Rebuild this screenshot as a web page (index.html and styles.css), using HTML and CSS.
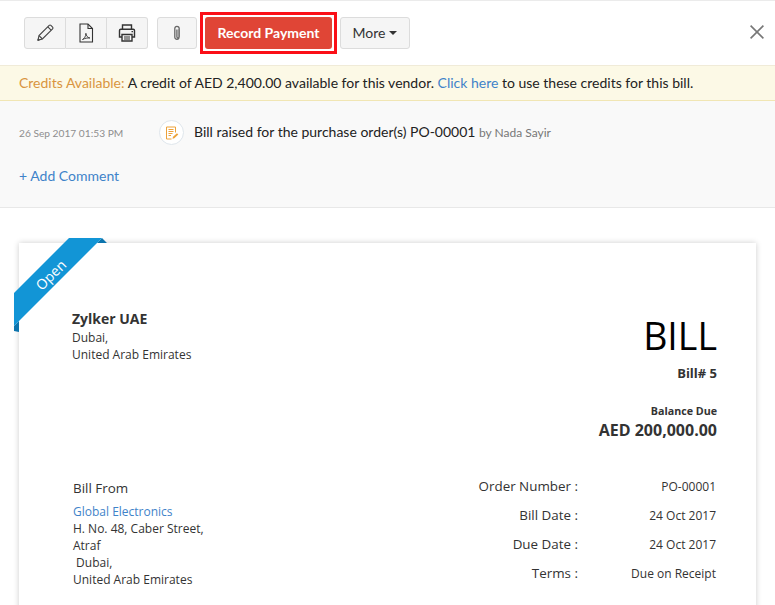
FILE: index.html
```html
<!DOCTYPE html>
<html lang="en">
<head>
<meta charset="utf-8">
<title>Bill 5</title>
<link rel="stylesheet" href="styles.css">
</head>
<body>
<header class="toolbar">
  <div class="btn-group">
    <button class="btn icon-btn first" aria-label="Edit"><svg width="20" height="20" viewBox="0 0 20 20" fill="none" stroke="#444" stroke-width="1.1"><path d="M3 17.2l1-4.6L14.2 2.4c.5-.5 1.2-.5 1.7 0l1.7 1.7c.5.5.5 1.2 0 1.7L7.4 16z"/><path d="M12.8 3.9l3.3 3.3M4 12.6L7.4 16"/><path d="M3 17.2l1.2-1.2" stroke-width="2"/></svg></button>
    <button class="btn icon-btn" aria-label="PDF"><svg width="16" height="20" viewBox="0 0 16 20" fill="none" stroke="#333" stroke-width="1.1"><path d="M2 1h8l4.500 4.500V19H2z"/><path d="M10 1v4.500h4.500"/><path d="M4.500 16.500c2-1 3.200-3 3.400-6.200.3 2.500 1.500 4.200 4 4.700-2.500-.2-5 .2-7.400 1.500z" stroke-width=".9"/></svg></button>
    <button class="btn icon-btn last" aria-label="Print"><svg width="18" height="18" viewBox="0 0 18 18" fill="none" stroke="#333" stroke-width="1.4"><path d="M4.500 5V1h9v4"/><path d="M4 13H1.500V6.500c0-.8.500-1.300 1.300-1.300h12.400c.8 0 1.300.5 1.300 1.300V13H14"/><path d="M4 10.500h10V17H4z"/><path d="M6 13h6M6 15h6" stroke-width="1"/><path d="M13.500 7.600h1.500" stroke-width="1.200"/></svg></button>
  </div>
  <button class="btn attach" aria-label="Attach"><svg width="10" height="16" viewBox="0 0 10 16" fill="none" stroke="#666" stroke-width="1.3"><path d="M7 4v8c0 1.300-.9 2.400-2.100 2.400S2.800 13.300 2.800 12V3.600c0-1.300.9-2.300 2.100-2.300s2.300 1 2.300 2.300v8.100c0 .7-.5 1.200-1.100 1.200s-1.200-.5-1.200-1.200V4.500"/></svg></button>
  <div class="primary-outline"><button class="btn-primary">Record Payment</button></div>
  <button class="btn more">More <span class="caret"></span></button>
  <button class="close" aria-label="Close"><svg width="14" height="14" viewBox="0 0 14 14" stroke="#777" stroke-width="1.600" fill="none"><path d="M.6.6l12.800 12.800M13.400.6L.6 13.400"/></svg></button>
</header>

<div class="banner"><span class="banner-label">Credits Available:</span> A credit of AED 2,400.00 available for this vendor. <a class="link" href="#">Click here</a> to use these credits for this bill.</div>

<section class="activity">
  <div class="activity-row">
    <time class="activity-time">26 Sep 2017 01:53 PM</time>
    <span class="activity-icon"><svg width="14" height="14" viewBox="0 0 14 14" fill="none" stroke="#eda23a" stroke-width="1"><path d="M10.500 6.500V1H1.500v12h5"/><path d="M3.500 3.500h5M3.500 5.500h5M3.500 7.500h4M3.500 9.500h2.500"/><path d="M7.500 12.800l.5-2 4-3.500 1.300 1.300-4 3.700z" fill="#eda23a" stroke="none"/></svg></span>
    <p class="activity-text">Bill raised for the purchase order(s) PO-00001 <span class="by">by Nada Sayir</span></p>
  </div>
  <a class="add-comment" href="#">+ Add Comment</a>
</section>

<main class="canvas">
  <article class="bill">
    <div class="ribbon">
      <svg class="ribbon-art" width="94" height="94" viewBox="0 0 94 94"><path d="M88 0l5 5H83zM0 88l5-5v11l-5-1z" fill="#0c74ad"/><path d="M55 0H88L0 88V55z" fill="#1295d6"/></svg>
      <span class="ribbon-text">Open</span>
    </div>
    <div class="bill-head">
      <div class="org">
        <strong class="org-name">Zylker UAE</strong>
        <div>Dubai,</div>
        <div>United Arab Emirates</div>
      </div>
      <div class="title-block">
        <h1 class="bill-title">BILL</h1>
        <div class="bill-no">Bill# 5</div>
        <div class="balance-label">Balance Due</div>
        <div class="balance-value">AED 200,000.00</div>
      </div>
    </div>
    <div class="bill-body">
      <div class="vendor">
        <div class="vendor-label">Bill From</div>
        <a class="vendor-name" href="#">Global Electronics</a>
        <div>H. No. 48, Caber Street,</div>
        <div>Atraf</div>
        <div>&nbsp;Dubai,</div>
        <div>United Arab Emirates</div>
      </div>
      <dl class="meta">
        <dt>Order Number :</dt><dd>PO-00001</dd>
        <dt>Bill Date :</dt><dd>24 Oct 2017</dd>
        <dt>Due Date :</dt><dd>24 Oct 2017</dd>
        <dt>Terms :</dt><dd>Due on Receipt</dd>
      </dl>
    </div>
  </article>
</main>
</body>
</html>
```
FILE: styles.css
```css
* { box-sizing: border-box; }
html, body { height: 605px; overflow: hidden; }
body { margin: 0; background: #fff; color: #222; font-family: Lato, "Liberation Sans", sans-serif; font-size: 14px; }
button { font: inherit; cursor: pointer; padding: 0; }

.toolbar { display: flex; align-items: center; height: 65px; border-top: 1px solid #ebebeb; padding-left: 24px; }
.btn { height: 32px; background: #f5f5f5; border: 1px solid #dcdcdc; border-radius: 3px; display: flex; align-items: center; justify-content: center; color: #333; }
.btn-group { display: flex; }
.icon-btn { width: 41px; border-radius: 0; border-left: 0; }
.icon-btn.first { width: 42px; border-left: 1px solid #dcdcdc; border-radius: 3px 0 0 3px; }
.icon-btn.last { border-radius: 0 3px 3px 0; }
.attach { width: 40px; margin-left: 9px; }
.primary-outline { margin-left: 3px; border: 3px solid #fb0f17; padding: 2px; height: 42px; width: 137px; }
.btn-primary { display: block; width: 100%; height: 100%; background: #e04536; color: #fff; border: 0; border-radius: 3px; font-size: 14px; font-weight: 700; padding-bottom: 2px; }
.more { width: 70px; margin-left: 3px; font-size: 14px; gap: 4px; padding-bottom: 2px; }
.caret { width: 0; height: 0; border: 4px solid transparent; border-top-color: #333; border-bottom: 0; margin-top: 2px; }
.close { margin-left: auto; margin-right: 11px; background: none; border: 0; display: flex; margin-bottom: 2px; }

.banner { height: 36px; background: #fcf9e6; border-top: 1px solid #f0ebd8; border-bottom: 1px solid #f1e6b4; padding-left: 19px; line-height: 33px; font-size: 14px; color: #222; }
.banner-label { color: #d9953f; }
.link { color: #3f83c9; text-decoration: none; }

.activity { height: 107px; background: #f9f9f9; border-bottom: 1px solid #e8e8e8; padding: 19px 19px 0; }
.activity-row { display: flex; align-items: center; height: 25px; }
.activity-time { width: 140px; font-size: 10.200px; color: #8e8e8e; }
.activity-icon { width: 25px; height: 25px; border-radius: 50%; background: #fff; border: 1px solid #dfe6ec; display: flex; align-items: center; justify-content: center; }
.activity-text { margin: 0 0 0 10px; font-size: 14px; color: #222; position: relative; top: -1px; }
.by { font-size: 12px; color: #777; }
.add-comment { display: block; margin-top: 22px; color: #3f83c9; text-decoration: none; font-size: 14px; }

.canvas { padding: 35px 19px 0; }
.bill { position: relative; height: 500px; background: #fff; box-shadow: 0 0 6px rgba(0,0,0,.2); padding: 66px 39px 0 53px; font-family: "Open Sans", sans-serif; font-size: 12px; line-height: 17px; color: #333; }
.ribbon { position: absolute; left: -5px; top: -5px; width: 94px; height: 94px; }
.ribbon-art { display: block; }
.ribbon-text { position: absolute; left: 17px; top: 28px; width: 40px; text-align: center; transform: rotate(-45deg); color: #fff; font-size: 14px; line-height: 18px; }

.bill-head { display: flex; justify-content: space-between; }
.org-name { display: block; font-size: 14px; line-height: 20px; color: #333; }
.title-block { text-align: right; }
.bill-title { margin: 5px 0 0; font-size: 37.500px; line-height: 44px; font-weight: 400; color: #000; }
.bill-no { font-size: 13px; font-weight: 700; line-height: 18px; margin-top: 6px; }
.balance-label { font-weight: 700; font-size: 10.700px; line-height: 14px; margin-top: 22px; }
.balance-value { font-weight: 700; font-size: 16px; line-height: 22px; margin-top: 1px; }

.bill-body { display: flex; justify-content: space-between; margin-top: 30px; }
.vendor { margin-left: 1px; line-height: 17px; padding-top: 7px; }
.vendor-label { font-size: 13.400px; line-height: 20px; margin-bottom: 5px; }
.vendor-name { color: #3f83c9; text-decoration: none; }
.meta { display: grid; grid-template-columns: auto 138px; grid-auto-rows: 29px; margin: 1px 1px 0 0; align-items: center; text-align: right; }
.meta dt { font-size: 13.400px; }
.meta dd { margin: 0; font-size: 12px; }
```
